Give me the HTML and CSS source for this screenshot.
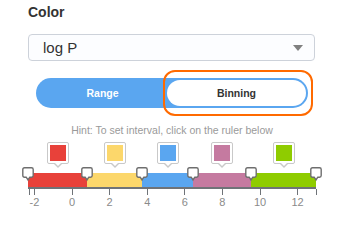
FILE: index.html
```html
<!DOCTYPE html>
<html>
<head>
<meta charset="utf-8">
<link rel="stylesheet" href="styles.css">
</head>
<body>
<div class="panel">
  <div class="title">Color</div>
  <div class="select">
    <span class="select-text">log P</span>
    <span class="caret"></span>
  </div>
  <div class="toggle">
    <div class="seg seg-range">Range</div>
    <div class="seg seg-binning">Binning</div>
    <div class="focus-ring"></div>
  </div>
  <div class="hint">Hint: To set interval, click on the ruler below</div>
  <div class="ruler">
    <div class="swatch" style="left:29.5px"><span class="chip c-red"></span></div>
    <div class="swatch" style="left:86.5px"><span class="chip c-yellow"></span></div>
    <div class="swatch" style="left:139.5px"><span class="chip c-blue"></span></div>
    <div class="swatch" style="left:194px"><span class="chip c-pink"></span></div>
    <div class="swatch" style="left:255.5px"><span class="chip c-green"></span></div>

    <div class="bar">
      <span class="c-red" style="width:59px"></span>
      <span class="c-yellow" style="width:55px"></span>
      <span class="c-blue" style="width:51px"></span>
      <span class="c-pink" style="width:58px"></span>
      <span class="c-green" style="width:65px"></span>
    </div>
    <div class="axis"></div>

    <svg class="handle" style="left:0px" width="12" height="14" viewBox="0 0 12 14"><path d="M2.5 0.8 H9.5 Q11.2 0.8 11.2 2.5 V8.6 Q11.2 10.2 9.5 10.2 H7.8 L6 13 L4.2 10.2 H2.5 Q0.8 10.2 0.8 8.6 V2.5 Q0.8 0.8 2.5 0.8 Z"/></svg>
    <svg class="handle" style="left:59px" width="12" height="14" viewBox="0 0 12 14"><path d="M2.5 0.8 H9.5 Q11.2 0.8 11.2 2.5 V8.6 Q11.2 10.2 9.5 10.2 H7.8 L6 13 L4.2 10.2 H2.5 Q0.8 10.2 0.8 8.6 V2.5 Q0.8 0.8 2.5 0.8 Z"/></svg>
    <svg class="handle" style="left:114px" width="12" height="14" viewBox="0 0 12 14"><path d="M2.5 0.8 H9.5 Q11.2 0.8 11.2 2.5 V8.6 Q11.2 10.2 9.5 10.2 H7.8 L6 13 L4.2 10.2 H2.5 Q0.8 10.2 0.8 8.6 V2.5 Q0.8 0.8 2.5 0.8 Z"/></svg>
    <svg class="handle" style="left:165px" width="12" height="14" viewBox="0 0 12 14"><path d="M2.5 0.8 H9.5 Q11.2 0.8 11.2 2.5 V8.6 Q11.2 10.2 9.5 10.2 H7.8 L6 13 L4.2 10.2 H2.5 Q0.8 10.2 0.8 8.6 V2.5 Q0.8 0.8 2.5 0.8 Z"/></svg>
    <svg class="handle" style="left:223px" width="12" height="14" viewBox="0 0 12 14"><path d="M2.5 0.8 H9.5 Q11.2 0.8 11.2 2.5 V8.6 Q11.2 10.2 9.5 10.2 H7.8 L6 13 L4.2 10.2 H2.5 Q0.8 10.2 0.8 8.6 V2.5 Q0.8 0.8 2.5 0.8 Z"/></svg>
    <svg class="handle" style="left:288px" width="12" height="14" viewBox="0 0 12 14"><path d="M2.5 0.8 H9.5 Q11.2 0.8 11.2 2.5 V8.6 Q11.2 10.2 9.5 10.2 H7.8 L6 13 L4.2 10.2 H2.5 Q0.8 10.2 0.8 8.6 V2.5 Q0.8 0.8 2.5 0.8 Z"/></svg>

    <span class="tick" style="left:1px"></span>
    <span class="tick" style="left:6.4px"></span>
    <span class="tick" style="left:44px"></span>
    <span class="tick" style="left:81.6px"></span>
    <span class="tick" style="left:119.2px"></span>
    <span class="tick" style="left:156.8px"></span>
    <span class="tick" style="left:194.4px"></span>
    <span class="tick" style="left:232px"></span>
    <span class="tick" style="left:269.6px"></span>
    <span class="tick" style="left:288px"></span>

    <span class="label" style="left:6.4px">-2</span>
    <span class="label" style="left:44px">0</span>
    <span class="label" style="left:81.6px">2</span>
    <span class="label" style="left:119.2px">4</span>
    <span class="label" style="left:156.8px">6</span>
    <span class="label" style="left:194.4px">8</span>
    <span class="label" style="left:232px">10</span>
    <span class="label" style="left:269.6px">12</span>
  </div>
</div>
</body>
</html>
```

FILE: styles.css
```css
html, body {
  margin: 0;
  padding: 0;
  background: #ffffff;
}
body {
  font-family: "Liberation Sans", Arial, sans-serif;
  color: #333;
}
.panel {
  width: 339px;
  height: 234px;
  box-sizing: border-box;
  padding: 4px 24px 0 28px;
  overflow: hidden;
}
.title {
  font-size: 14px;
  font-weight: bold;
  line-height: 16px;
  color: #333;
}
.select {
  margin-top: 14px;
  width: 287px;
  height: 27px;
  box-sizing: border-box;
  border: 1px solid #cdd2da;
  border-radius: 4px;
  background: #fcfdff;
  display: flex;
  align-items: center;
  justify-content: space-between;
  padding: 0 11px 0 14px;
}
.select-text {
  font-size: 15px;
  color: #333;
}
.caret {
  width: 0;
  height: 0;
  border-left: 5px solid transparent;
  border-right: 5px solid transparent;
  border-top: 6px solid #808080;
}
.toggle {
  position: relative;
  margin: 17px 0 0 8px;
  width: 272px;
  height: 30px;
  box-sizing: border-box;
  padding: 2px;
  border-radius: 15px;
  background: #5aa6f0;
  display: flex;
}
.seg {
  font-size: 10.5px;
  font-weight: bold;
  display: flex;
  align-items: center;
  justify-content: center;
}
.seg-range {
  flex: 1;
  color: #ffffff;
}
.seg-binning {
  width: 139px;
  background: #ffffff;
  border-radius: 13px;
  color: #333;
}
.focus-ring {
  position: absolute;
  left: 127px;
  top: -8px;
  width: 150px;
  height: 46px;
  box-sizing: border-box;
  border: 2px solid #ff6a00;
  border-radius: 12px;
}
.hint {
  margin-top: 16px;
  font-size: 10.5px;
  line-height: 12px;
  color: #9a9a9a;
  text-align: center;
  width: 288px;
}
.ruler {
  position: relative;
  margin-top: 4px;
  width: 288px;
  height: 70px;
}
.swatch {
  position: absolute;
  top: 2px;
  width: 22px;
  height: 22px;
  box-sizing: border-box;
  margin-left: -11px;
  border: 1px solid #c9c9c9;
  border-radius: 2px;
  padding: 2px;
  background: #fff;
}
.swatch::before {
  content: "";
  position: absolute;
  left: 6px;
  bottom: -5px;
  border-left: 4px solid transparent;
  border-right: 4px solid transparent;
  border-top: 4px solid #c9c9c9;
}
.swatch::after {
  content: "";
  position: absolute;
  left: 7px;
  bottom: -3px;
  border-left: 3px solid transparent;
  border-right: 3px solid transparent;
  border-top: 3px solid #fff;
}
.chip {
  display: block;
  width: 16px;
  height: 16px;
}
.c-red { background: #e8413a; }
.c-yellow { background: #fcd76b; }
.c-blue { background: #5aa6f0; }
.c-pink { background: #c57aa0; }
.c-green { background: #8fcc00; }
.bar {
  position: absolute;
  left: 0;
  top: 33px;
  width: 288px;
  height: 14px;
  display: flex;
}
.bar span {
  display: block;
  height: 14px;
}
.axis {
  position: absolute;
  left: 0;
  top: 47px;
  width: 288px;
  height: 2px;
  background: #6f7378;
}
.handle {
  position: absolute;
  top: 27px;
  margin-left: -6px;
  overflow: visible;
}
.handle path {
  fill: #ffffff;
  stroke: #6e6e6e;
  stroke-width: 1.4;
}
.tick {
  position: absolute;
  top: 49px;
  width: 1px;
  height: 6px;
  margin-left: -0.5px;
  background: #6f7378;
}
.label {
  position: absolute;
  top: 56px;
  width: 30px;
  margin-left: -15px;
  text-align: center;
  font-size: 11px;
  line-height: 13px;
  color: #8a8a8a;
}
```
